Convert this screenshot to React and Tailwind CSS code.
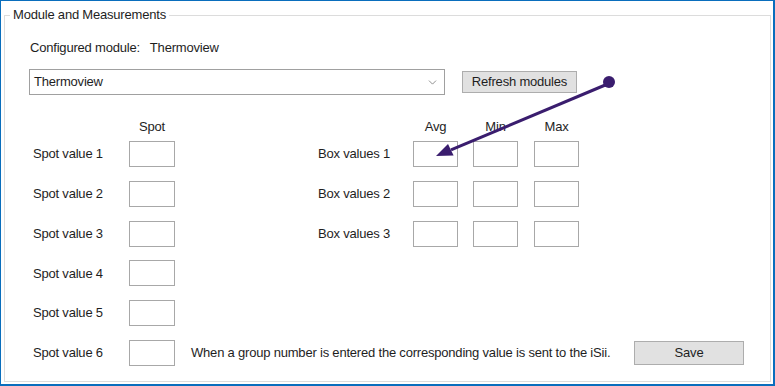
import { ChevronDown } from 'lucide-react'

const font = { fontFamily: '"Liberation Sans", Arial, sans-serif' }

function Box({ className = 'w-[46px]' }) {
  return <div className={`h-[26px] border border-[#a8a8a8] bg-white ${className}`} />
}

function SpotRow({ n, children }) {
  return (
    <div className="flex h-[26px] items-center">
      <span className="w-[96px]">Spot value {n}</span>
      <Box />
      {children}
    </div>
  )
}

function BoxValues({ n }) {
  return (
    <div className="ml-[143px] flex items-center">
      <span className="w-[95px]">Box values {n}</span>
      <Box className="w-[45px]" />
      <Box className="ml-[15px] w-[45px]" />
      <Box className="ml-[16px] w-[45px]" />
    </div>
  )
}

export default function App() {
  return (
    <div
      className="relative h-[386px] w-[775px] overflow-hidden border-t border-l border-r-2 border-b-2 border-[#0a6ebd] bg-white text-[13px] text-[#1e1e1e]"
      style={font}
    >
      <fieldset className="ml-[3px] mt-[6px] h-[375px] w-[767px] border border-[#dcdcdc]">
        <legend className="ml-[5px] px-[3px] leading-[16px] tracking-[-0.2px]">Module and Measurements</legend>

        <div className="ml-[25px] mt-[17px] flex leading-[16px] tracking-[-0.2px]">
          <span>Configured module:</span>
          <span className="ml-[10px]">Thermoview</span>
        </div>

        <div className="ml-[24px] mt-[13px] flex items-center">
          <div className="flex h-[26px] w-[416px] items-center justify-between border border-[#a0a0a0] pl-[4px] pr-[5px] tracking-[-0.2px]">
            <span>Thermoview</span>
            <ChevronDown size={13} strokeWidth={1.2} className="text-[#555]" />
          </div>
          <button className="ml-[17px] h-[22px] w-[115px] border border-[#adadad] bg-[#e1e1e1] tracking-[-0.2px]">
            Refresh modules
          </button>
        </div>

        <div className="ml-[28px] mt-[24px] tracking-[-0.2px]">
          <div className="flex h-[16px] items-center leading-[16px]">
            <span className="w-[96px]" />
            <span className="w-[46px] text-center">Spot</span>
            <span className="ml-[238px] w-[45px] text-center">Avg</span>
            <span className="ml-[15px] w-[45px] text-center">Min</span>
            <span className="ml-[16px] w-[45px] text-center">Max</span>
          </div>

          <div className="mt-[6px] flex flex-col gap-[13.8px]">
            <SpotRow n={1}>
              <BoxValues n={1} />
            </SpotRow>
            <SpotRow n={2}>
              <BoxValues n={2} />
            </SpotRow>
            <SpotRow n={3}>
              <BoxValues n={3} />
            </SpotRow>
            <SpotRow n={4} />
            <SpotRow n={5} />
            <SpotRow n={6}>
              <span className="ml-[16px] w-[443px] whitespace-nowrap">
                When a group number is entered the corresponding value is sent to the iSii.
              </span>
              <button className="h-[24px] w-[110px] border border-[#adadad] bg-[#e1e1e1]">Save</button>
            </SpotRow>
          </div>
        </div>
      </fieldset>

      <svg className="pointer-events-none absolute inset-0" width="775" height="386">
        <line x1="609" y1="82" x2="450" y2="148.8" stroke="#3a1d6e" strokeWidth="3" />
        <polygon points="435,155 452.6,154.6 447,143" fill="#3a1d6e" />
        <circle cx="608" cy="81" r="6" fill="#3a1d6e" />
      </svg>
    </div>
  )
}
